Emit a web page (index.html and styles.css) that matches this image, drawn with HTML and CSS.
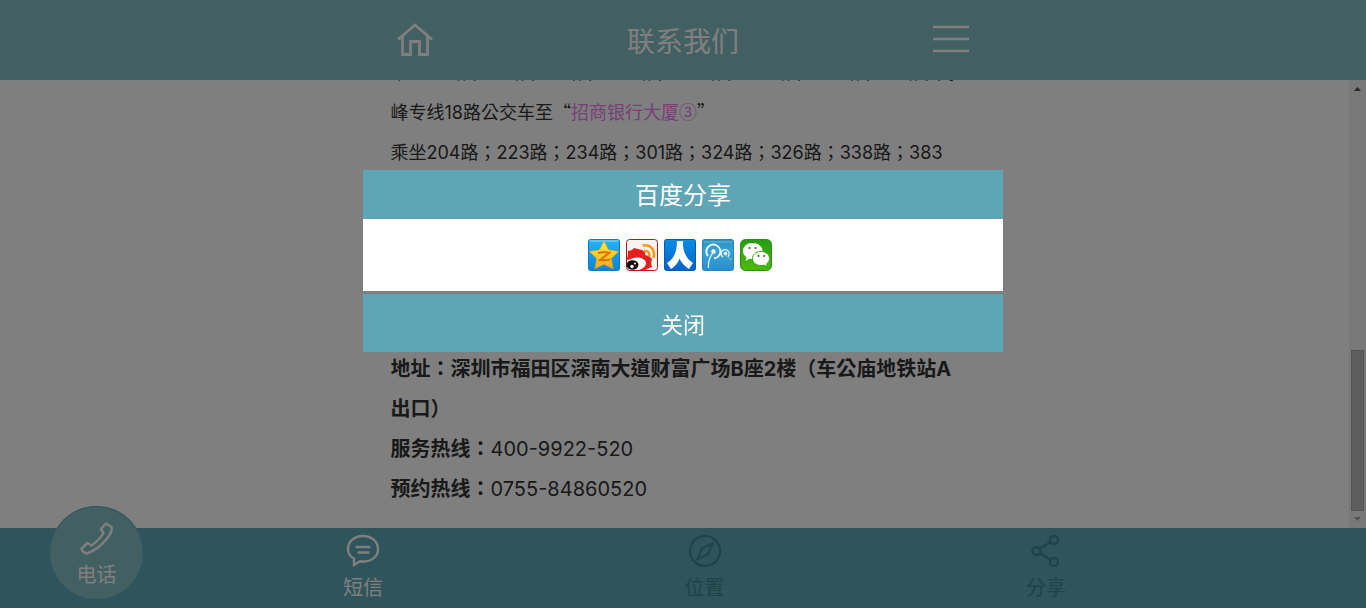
FILE: index.html
```html
<!DOCTYPE html>
<html lang="zh-CN">
<head>
    <meta charset="UTF-8">
    <meta name="viewport" content="width=device-width, initial-scale=1.0">
    <title>联系我们</title>
    <link rel="stylesheet" href="styles.css">
</head>
<body>
    <header class="header">
        <div class="header-inner">
            <a class="header-link" href="#" aria-label="首页">
                <svg width="36" height="36" viewBox="0 0 36 36" fill="none" stroke="#fff" stroke-width="2.8">
                    <path d="M1 17.500L18 3l17 14.500M5.500 14v18.500h8V19.500h9v13h8V14"/>
                </svg>
            </a>
            <h1 class="header-title">联系我们</h1>
            <button class="header-link" type="button" aria-label="菜单">
                <svg width="36" height="36" viewBox="0 0 36 36" stroke="#fff" stroke-width="2.400">
                    <path d="M0 5h36M0 17h36M0 29h36"/>
                </svg>
            </button>
        </div>
    </header>

    <main class="main">
        <div class="content">
            <p class="route">乘坐20路；26路；79路；204路；223路；234路；338路；80路；高<br>峰专线18路公交车至<span class="quote">“<span class="stop">招商银行大厦③</span>”</span></p>
            <p class="route">乘坐204路；223路；234路；301路；324路；326路；338路；383</p>
            <div class="contact">
                <p><strong>地址：深圳市福田区深南大道财富广场B座2楼（车公庙地铁站A<br>出口）</strong></p>
                <p><strong>服务热线：</strong>400-9922-520</p>
                <p><strong>预约热线：</strong>0755-84860520</p>
            </div>
        </div>
        <div class="scrollbar" aria-hidden="true">
            <svg class="arrow" viewBox="0 0 17 17" fill="#505050"><path d="M8.500 7L12 11H5z"/></svg>
            <div class="track"><div class="thumb"></div></div>
            <svg class="arrow" viewBox="0 0 17 17" fill="#a3a3a3"><path d="M8.500 10L12 6H5z"/></svg>
        </div>
    </main>

    <footer class="footer">
        <a class="phone" href="tel:4009922520">
            <svg width="34" height="34" viewBox="0 0 34 34" fill="none" stroke="#fff" stroke-width="2.400" stroke-linejoin="round">
                <path d="M26 2.500l5.500 3.500c1 3-.5 6.500-4.500 11.500C21 25 14 30 7 32.500c-2 .5-5.500-3-5.500-5l6-5.500 4 2.500c5-3.500 9-7.500 12-12.500l-2.500-4z"/>
            </svg>
            电话
        </a>
        <nav class="nav">
            <a class="nav-item nav-sms" href="sms:4009922520">
                <svg width="34" height="34" viewBox="0 0 34 34" fill="none" stroke="currentColor" stroke-width="2.400">
                    <path d="M8 25.500C4 23.500 2 20 2 16 2 8.500 8.500 3 17 3s15 5.500 15 13-6.500 12.500-15 12.500l-3-.2L8 32zM9.500 14h15M11.500 19.500h12"/>
                </svg>
                短信
            </a>
            <a class="nav-item nav-map" href="#">
                <svg width="34" height="34" viewBox="0 0 34 34" fill="none" stroke="currentColor" stroke-width="2.200">
                    <circle cx="17" cy="18" r="15"/>
                    <path d="M24.500 10.500L20 21.500 9.500 26 14 15z"/>
                </svg>
                位置
            </a>
            <a class="nav-item nav-share" href="#">
                <svg width="34" height="34" viewBox="0 0 34 34" fill="none" stroke="currentColor" stroke-width="2.400">
                    <circle cx="7.500" cy="18" r="4"/>
                    <circle cx="25" cy="7" r="4"/>
                    <circle cx="25" cy="29" r="4"/>
                    <path d="M11 15.800L21.500 9.300M11 20.200L21.500 26.700"/>
                </svg>
                分享
            </a>
        </nav>
    </footer>

    <div class="overlay">
        <div class="dialog" role="dialog" aria-labelledby="shareTitle">
            <h2 class="dialog-title" id="shareTitle">百度分享</h2>
            <div class="share-list">
                <a href="#" aria-label="QQ空间">
                    <svg viewBox="0 0 32 32">
                        <defs>
                            <linearGradient id="qz" x2="0" y2="1"><stop stop-color="#27b4f4"/><stop offset="1" stop-color="#0784dc"/></linearGradient>
                            <linearGradient id="star" x2="0" y2="1"><stop stop-color="#ffee38"/><stop offset="1" stop-color="#ffa81c"/></linearGradient>
                        </defs>
                        <rect x=".5" y=".5" width="31" height="31" rx="2" fill="url(#qz)" stroke="#0b7bc8"/>
                        <path d="M2 2h28" stroke="#8bdcff"/>
                        <path d="M16 2l4.500 8.800 10 1.700-7.200 7 1.900 10.300-9.200-4.500-9.200 4.500 1.900-10.300-7.200-7 10-1.700z" fill="url(#star)" stroke="#e6a11b" stroke-width=".6"/>
                        <path d="M10 14c4-1 8-1 11.500-.3L12 21c4 .6 7.500.3 10.500-.6" fill="none" stroke="#dd6f08" stroke-width="1.900"/>
                    </svg>
                </a>
                <a href="#" aria-label="新浪微博">
                    <svg viewBox="0 0 32 32">
                        <rect x=".5" y=".5" width="31" height="31" rx="3" fill="#f7f3f3" stroke="#c21313"/>
                        <path d="M1 20l1-5 0-3 4-1 2-2 4 1 4 1 3 2v3l4 1 3 3-1 4 1 4-5 2-2 1H9z" fill="#e32020"/>
                        <path d="M1 22c6-4 14-5 18-.5 3 4-1 7.500-6 9.500H4l-3-3z" fill="#fff"/>
                        <ellipse cx="6.500" cy="26" rx="6" ry="4.800" fill="#111"/>
                        <circle cx="6" cy="27.500" r="1.700" fill="#fff"/><circle cx="9" cy="24.500" r="1" fill="#fff"/>
                        <path d="M16.500 6.500C25 5 29.500 11 27.500 19M18 12c4.500-.5 6 2 5 5.500" fill="none" stroke="#f59b16" stroke-width="2.600"/>
                    </svg>
                </a>
                <a href="#" aria-label="人人网">
                    <svg viewBox="0 0 32 32">
                        <defs><linearGradient id="rr" x2="0" y2="1"><stop stop-color="#078de5"/><stop offset="1" stop-color="#0860c8"/></linearGradient></defs>
                        <rect x=".5" y=".5" width="31" height="31" rx="2" fill="url(#rr)" stroke="#0758b5"/>
                        <path d="M13 2h6c-.5 10 2.500 17 10 22l-4 6c-4-2.500-7.500-6-9.500-10.500C14 24 11 27.500 7 30l-4-6c7-4.500 10-11 10-22z" fill="#fff"/>
                    </svg>
                </a>
                <a href="#" aria-label="腾讯微博">
                    <svg viewBox="0 0 32 32">
                        <defs><linearGradient id="tx" x2="0" y2="1"><stop stop-color="#2d91bd"/><stop offset=".4" stop-color="#3ba2d8"/><stop offset="1" stop-color="#258fd0"/></linearGradient></defs>
                        <rect x=".5" y=".5" width="31" height="31" rx="2" fill="url(#tx)" stroke="#2b84b6"/>
                        <path d="M2 3h28" stroke="#65bce4"/>
                        <g fill="none" stroke="#e4f5fb">
                            <path d="M6 17a7 7 0 1 1 6 2.500" stroke-width="2"/>
                            <path d="M11.500 13c-4 5-5.500 10-5 16" stroke-width="1.300"/>
                            <path d="M21 18a4 4 0 1 1 5-.5" stroke-width="1.300"/>
                            <path d="M23.500 14.500c1 3 3 5 6 6" stroke="#a3d36c"/>
                        </g>
                        <circle cx="11.500" cy="12.500" r="2.200" fill="#fff"/><circle cx="23.500" cy="14.500" r="1.800" fill="#fff"/>
                    </svg>
                </a>
                <a href="#" aria-label="微信">
                    <svg viewBox="0 0 32 32">
                        <defs><linearGradient id="wx" x2="0" y2="1"><stop stop-color="#249d12"/><stop offset="1" stop-color="#4dbb09"/></linearGradient></defs>
                        <rect x=".5" y=".5" width="31" height="31" rx="5" fill="url(#wx)" stroke="#298b18"/>
                        <path d="M12.500 4C7 4 3 7.500 3 12c0 2.700 1.300 4.800 3.500 6.200L5.500 22l4-2.300c1 .3 2 .3 3 .3 5.500 0 10-3.500 10-8s-4.500-8-10-8z" fill="#fff"/>
                        <path d="M21 12.500c-5 0-8.500 3-8.500 7s3.500 7 8.500 7c1 0 2 0 3-.4l3.500 2-1-3.200c2-1.300 3-3.200 3-5.400 0-4-3.500-7-8.500-7z" fill="#fff" stroke="#37aa0c"/>
                        <g fill="#2d6b1e"><circle cx="9.500" cy="9" r="1.100"/><circle cx="15.500" cy="9" r="1.100"/><circle cx="18.500" cy="17" r="1"/><circle cx="24" cy="17" r="1"/></g>
                    </svg>
                </a>
            </div>
            <button class="dialog-close" type="button">关闭</button>
        </div>
    </div>
</body>
</html>
```
FILE: styles.css
```css
* {
    box-sizing: border-box;
}

body {
    margin: 0;
    height: 100vh;
    display: flex;
    flex-direction: column;
    overflow: hidden;
    background-color: #fff;
    color: #333;
    font-family: Inter, "Noto Sans CJK SC", sans-serif;
}

h1, h2, p {
    margin: 0;
    font-weight: normal;
}

a {
    text-decoration: none;
}

button {
    border: none;
    padding: 0;
    font-family: inherit;
    cursor: pointer;
}

svg {
    display: block;
}

/* header */
.header {
    flex: none;
    background-color: #84c1c3;
}

.header-inner {
    display: flex;
    align-items: center;
    justify-content: space-between;
    max-width: 640px;
    height: 80px;
    margin: 0 auto;
    padding: 0 34px;
}

.header-link {
    background: none;
}

.header-title {
    padding-top: 4px;
    color: #fff;
    font-size: 28px;
    line-height: 40px;
}

/* page text */
.main {
    flex: 1;
    min-height: 0;
    display: flex;
}

.content {
    flex: 1;
    display: flex;
    flex-direction: column;
    align-items: center;
    justify-content: flex-end;
    overflow: hidden;
    padding-bottom: 19px;
    line-height: 40px;
    /* centred full-width punctuation */
    font-family: Inter, "Noto Sans CJK TC", sans-serif;
    font-feature-settings: "locl" 0;
}

.route, .contact {
    width: 100%;
    max-width: 568px;
    white-space: nowrap;
}

.route {
    font-size: 18px;
}

.quote {
    font-family: "Noto Sans CJK SC", sans-serif;
    line-height: 1;
}

.stop {
    color: violet;
}

.contact {
    margin-top: 176px;
    font-size: 20px;
}

.scrollbar {
    width: 17px;
    display: flex;
    flex-direction: column;
    background-color: #f1f1f1;
}

.arrow {
    width: 17px;
    height: 17px;
}

.track {
    flex: 1;
    display: flex;
    align-items: flex-end;
    padding: 0 2px;
}

.thumb {
    width: 100%;
    height: 39%;
    background-color: #bcbcbc;
    border: 1px solid #a8a8a8;
}

/* bottom bar */
.footer {
    position: relative;
    flex: none;
    background-color: #5ea8b8;
    font-size: 20px;
}

.nav {
    display: grid;
    grid-template-columns: repeat(4, 1fr);
    height: 80px;
}

.nav-item {
    display: flex;
    flex-direction: column;
    align-items: center;
    width: 43px;
    padding-top: 5px;
    line-height: 42px;
    color: #3d8a90;
}

.nav-sms {
    grid-column: 2;
    color: #fff;
}

.phone {
    position: absolute;
    left: 50px;
    top: -22px;
    display: flex;
    flex-direction: column;
    align-items: center;
    width: 93px;
    height: 93px;
    padding-top: 15px;
    border-radius: 50%;
    background-color: #84c1c3;
    box-shadow: inset 0 1px 1px #5ea8b8;
    color: #fff;
    line-height: 40px;
}

/* share dialog */
.overlay {
    position: fixed;
    inset: 0;
    padding-top: 170px;
    background-color: rgba(0, 0, 0, 0.5);
}

.dialog {
    max-width: 640px;
    margin: 0 auto;
    color: #fff;
}

.dialog-title {
    padding-top: 2px;
    background-color: #5ea5b5;
    font-size: 24px;
    line-height: 47px;
    text-align: center;
}

.share-list {
    display: flex;
    justify-content: center;
    padding: 20px 0;
    background-color: #fff;
}

.share-list a {
    width: 32px;
    height: 32px;
    margin-right: 6px;
}

.dialog-close {
    display: block;
    width: 100%;
    height: 58px;
    margin-top: 3px;
    background-color: #5ea5b5;
    color: #fff;
    font-size: 22px;
}
```
